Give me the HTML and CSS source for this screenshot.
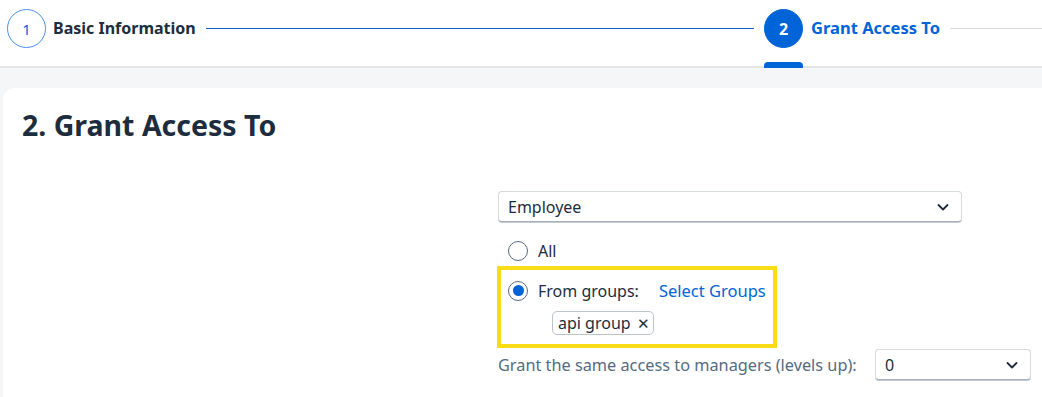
FILE: index.html
```html
<!DOCTYPE html>
<html>
<head>
<meta charset="utf-8">
<link rel="stylesheet" href="styles.css">
</head>
<body>
<header class="wizard">
  <div class="step done">
    <span class="num">1</span>
    <span class="label">Basic Information</span>
  </div>
  <div class="line active"></div>
  <div class="step current">
    <span class="num">2</span>
    <span class="label">Grant Access To</span>
    <span class="tab"></span>
  </div>
  <div class="line rest"></div>
</header>
<main class="card">
  <h1 class="title">2. Grant Access To</h1>
  <div class="form">
    <div class="select wide">
      <span>Employee</span>
      <svg class="chev" viewBox="0 0 16 16" width="16" height="16"><path d="M3.5 6 L8 10.5 L12.5 6" fill="none" stroke="#1d2d3e" stroke-width="1.8" stroke-linecap="round" stroke-linejoin="round"/></svg>
    </div>
    <label class="radio"><span class="circle"></span><span>All</span></label>
    <div class="highlight">
      <div class="radio-row">
        <label class="radio"><span class="circle on"></span><span>From groups:</span></label>
        <a class="link">Select Groups</a>
      </div>
      <div class="token">api group <span class="x">✕</span></div>
    </div>
    <div class="managers">
      <span class="mlabel">Grant the same access to managers (levels up):</span>
      <div class="select small">
        <span>0</span>
        <svg class="chev" viewBox="0 0 16 16" width="16" height="16"><path d="M3.5 6 L8 10.5 L12.5 6" fill="none" stroke="#1d2d3e" stroke-width="1.8" stroke-linecap="round" stroke-linejoin="round"/></svg>
      </div>
    </div>
  </div>
</main>
</body>
</html>
```
FILE: styles.css
```css
* { box-sizing: border-box; }
html, body { margin: 0; height: 100%; }
body {
  background: #f5f6f7;
  font-family: "Noto Sans", "Liberation Sans", sans-serif;
  color: #1d2d3e;
  overflow: hidden;
}
.wizard {
  height: 68px;
  background: #fff;
  border-bottom: 2px solid #e5e5e5;
  display: flex;
  align-items: flex-start;
  padding: 9px 0 0 7px;
}
.step {
  position: relative;
  display: flex;
  align-items: center;
  height: 39px;
}
.num {
  width: 39px;
  height: 39px;
  border-radius: 50%;
  border: 1px solid #0064d9;
  color: #0064d9;
  display: flex;
  align-items: center;
  justify-content: center;
  font-size: 15px;
}
.step.done .num { border-color: #4a8ef0; }
.label {
  font-weight: 700;
  font-size: 16px;
  margin-left: 7px;
  margin-top: -2px;
  color: #1d2d3e;
}
.step.current .num {
  background: #0064d9;
  color: #fff;
  font-weight: 700;
  font-size: 16px;
}
.step.current .label { color: #0064d9; margin-left: 8px; font-size: 16.5px; }
.tab {
  position: absolute;
  left: 0;
  top: 53px;
  width: 39px;
  height: 6px;
  background: #0064d9;
  border-radius: 4px 4px 0 0;
}
.line {
  height: 1px;
  background: #d9d9d9;
  margin-top: 19px;
}
.line.active {
  flex: 1;
  background: #0a5fc8;
  margin-left: 10px;
  margin-right: 10px;
}
.line.rest {
  flex: 0 0 92px;
  margin-left: 10px;
}
.card {
  margin: 20px 0 0 3px;
  background: #fff;
  border-radius: 12px 0 0 0;
  height: 320px;
  padding: 19px 0 0 19px;
}
.title {
  margin: 0;
  font-size: 28.5px;
  font-weight: 700;
  line-height: 36px;
}
.form {
  margin: 48px 0 0 476px;
  display: flex;
  flex-direction: column;
  align-items: flex-start;
}
.select {
  display: flex;
  align-items: center;
  justify-content: space-between;
  height: 31px;
  border: 1px solid #d5dadd;
  border-bottom: 1px solid #a6b1bd;
  border-radius: 4px;
  box-shadow: 0 1px 0 #c2c9d0;
  padding: 0 9px;
  font-size: 16px;
  background: #fff;
}
.select.wide { width: 464px; }
.select.small { width: 156px; }
.chev { margin-right: 1px; }
.radio {
  display: flex;
  align-items: center;
  font-size: 16px;
  height: 20px;
}
.form > .radio { margin: 19px 0 0 10px; }
.circle {
  width: 20px;
  height: 20px;
  border-radius: 50%;
  border: 1px solid #556b82;
  margin-right: 10px;
  display: flex;
  align-items: center;
  justify-content: center;
  background: #fff;
}
.circle.on::after {
  content: "";
  width: 11px;
  height: 11px;
  border-radius: 50%;
  background: #0064d9;
}
.highlight {
  margin: 5px 0 0 -1px;
  width: 280px;
  height: 82px;
  border: 4px solid #f7dc16;
  padding: 9px 0 0 7px;
}
.radio-row {
  display: flex;
  align-items: center;
}
.link {
  color: #0064d9;
  font-size: 16.5px;
  margin-left: 20px;
}
.token {
  margin: 9px 0 0 44px;
  height: 24px;
  width: 102px;
  border: 1px solid #bcc3ca;
  border-radius: 5px;
  font-size: 16px;
  display: flex;
  align-items: center;
  padding-left: 5px;
}
.token .x { font-size: 15px; margin-left: 6px; }
.managers {
  margin-top: 1px;
  display: flex;
  align-items: center;
  width: 533px;
  justify-content: space-between;
}
.mlabel { color: #556b82; font-size: 16.3px; }
```
